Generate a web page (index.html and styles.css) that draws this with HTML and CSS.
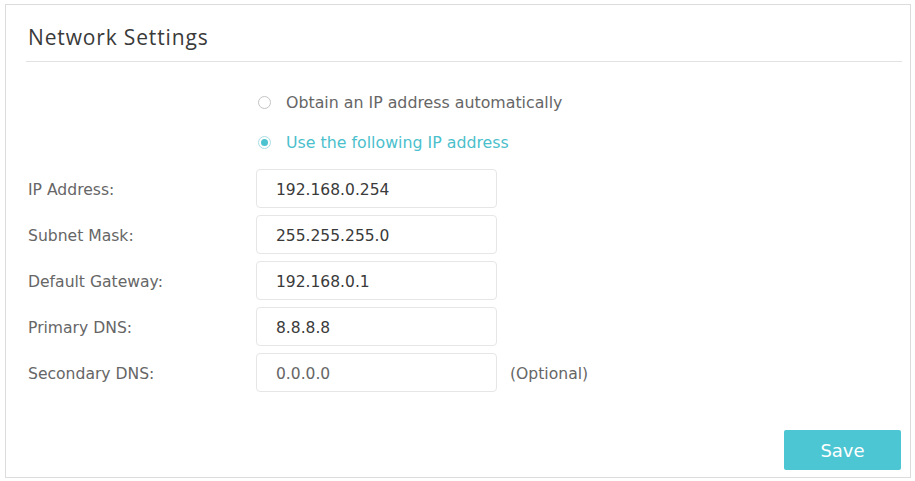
FILE: index.html
```html
<!DOCTYPE html>
<html lang="en">
<head>
<meta charset="utf-8">
<title>Network Settings</title>
<link rel="stylesheet" href="styles.css">
</head>
<body>
<div class="panel">
  <div class="panel-head">
    <h1 class="title">Network Settings</h1>
  </div>
  <div class="radios">
    <label class="radio">
      <span class="dot"></span>
      <span class="radio-text">Obtain an IP address automatically</span>
    </label>
    <label class="radio radio-on">
      <span class="dot"></span>
      <span class="radio-text">Use the following IP address</span>
    </label>
  </div>
  <div class="form">
    <div class="label">IP Address:</div>
    <div class="field">192.168.0.254</div>
    <div class="note"></div>

    <div class="label">Subnet Mask:</div>
    <div class="field">255.255.255.0</div>
    <div class="note"></div>

    <div class="label">Default Gateway:</div>
    <div class="field">192.168.0.1</div>
    <div class="note"></div>

    <div class="label">Primary DNS:</div>
    <div class="field">8.8.8.8</div>
    <div class="note"></div>

    <div class="label">Secondary DNS:</div>
    <div class="field field-muted">0.0.0.0</div>
    <div class="note">(Optional)</div>
  </div>
  <div class="actions">
    <button class="save" type="button">Save</button>
  </div>
</div>
</body>
</html>
```

FILE: styles.css
```css
* { box-sizing: border-box; }

html, body {
  margin: 0;
  padding: 0;
  background: #ffffff;
}

body {
  font-family: "DejaVu Sans", "Open Sans", sans-serif;
  color: #555;
  width: 915px;
  height: 481px;
  overflow: hidden;
}

.panel {
  margin: 4px 4px 0 5px;
  height: 474px;
  border: 1px solid #dcdcdc;
  background: #fff;
}

.panel-head {
  margin: 0 8px 0 20px;
  height: 57px;
  padding: 8px 0 0 2px;
  border-bottom: 1px solid #e2e2e2;
  display: flex;
  align-items: center;
}

.title {
  margin: 0;
  font-family: "Open Sans", "DejaVu Sans", sans-serif;
  font-size: 21px;
  font-weight: normal;
  color: #3a3a3a;
  letter-spacing: 0.85px;
}

.radios {
  padding: 20px 0 0 252px;
  display: flex;
  flex-direction: column;
}

.radio {
  height: 40px;
  display: flex;
  align-items: center;
  font-size: 15.8px;
  color: #666;
}

.dot {
  width: 13px;
  height: 13px;
  border: 1px solid #c4c4c4;
  border-radius: 50%;
  margin-right: 15px;
  display: flex;
  align-items: center;
  justify-content: center;
}

.radio-on { color: #4bbfcc; }

.radio-on .dot {
  border-color: #a8dde3;
}

.radio-on .dot::after {
  content: "";
  width: 7px;
  height: 7px;
  border-radius: 50%;
  background: #4cc3cf;
}

.form {
  margin-top: 7px;
  display: grid;
  grid-template-columns: 250px 241px auto;
  grid-auto-rows: 39px;
  row-gap: 7px;
  align-items: center;
}

.label {
  padding-left: 22px;
  padding-top: 3px;
  font-size: 15.6px;
  color: #666;
}

.field {
  height: 39px;
  border: 1px solid #e6e6e6;
  border-radius: 4px;
  padding: 2px 0 0 19px;
  display: flex;
  align-items: center;
  font-size: 15.5px;
  color: #3a3a3a;
}

.field-muted { color: #666; }

.note {
  padding-left: 13px;
  padding-top: 3px;
  font-size: 15.6px;
  color: #666;
}

.actions {
  margin-top: 38px;
  padding-right: 9px;
  display: flex;
  justify-content: flex-end;
}

.save {
  width: 117px;
  height: 40px;
  border: none;
  border-radius: 2px;
  background: #4cc6d3;
  color: #fff;
  font-family: "DejaVu Sans", "Open Sans", sans-serif;
  font-size: 18px;
  cursor: pointer;
}
```
